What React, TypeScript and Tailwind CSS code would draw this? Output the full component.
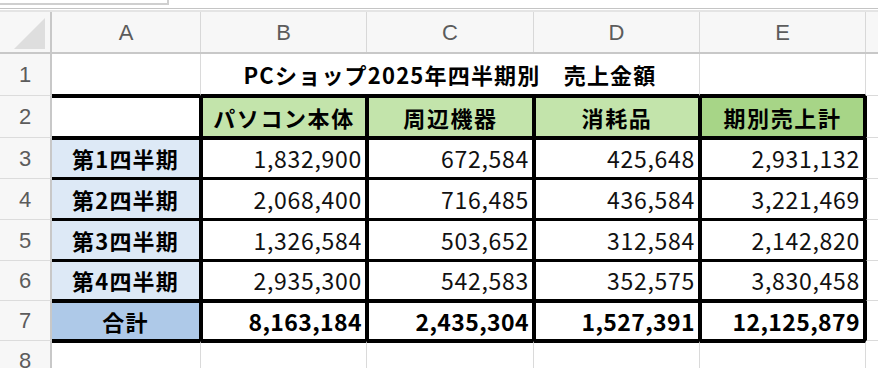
import React from "react";

const CJK = "font-['Noto_Sans_CJK_JP',sans-serif]";
const HDR = "font-['Liberation_Sans',sans-serif] text-[22px] text-[#5c5c5c]";

const W = {
  A: "w-[149px]",
  B: "w-[166px]",
  C: "w-[167px]",
  D: "w-[166px]",
  E: "w-[166px]",
};

function RowHead({ n, h }: { n: string; h: string }) {
  return (
    <div
      className={`${h} w-[52px] shrink-0 bg-[#f7f7f7] border-r-2 border-r-[#c8c8c8] border-b border-b-[#dcdcdc] flex items-center justify-center ${HDR}`}
    >
      {n}
    </div>
  );
}

const dataRows = [
  ["第1四半期", "1,832,900", "672,584", "425,648", "2,931,132"],
  ["第2四半期", "2,068,400", "716,485", "436,584", "3,221,469"],
  ["第3四半期", "1,326,584", "503,652", "312,584", "2,142,820"],
  ["第4四半期", "2,935,300", "542,583", "352,575", "3,830,458"],
];
const total = ["合計", "8,163,184", "2,435,304", "1,527,391", "12,125,879"];

export default function App() {
  const grid = "border-[#dadada]";
  return (
    <div className={`w-[878px] h-[368px] overflow-hidden bg-white flex flex-col ${CJK}`}>
      {/* top strip */}
      <div className="h-[12px] shrink-0 flex flex-col">
        <div className="h-[5px] w-[169px] border-r-2 border-b-2 border-[#cfcfcf] bg-white" />
        <div className="h-[3px]" />
        <div className="h-[1px] bg-[#c4c4c4]" />
        <div className="h-[1px] bg-white" />
        <div className="h-[2px] bg-[#e4e4e4]" />
      </div>

      {/* column header */}
      <div className="h-[42px] shrink-0 flex bg-[#f7f7f7] border-b-2 border-b-[#c8c8c8]">
        <div className="w-[52px] shrink-0 border-r-2 border-r-[#c8c8c8] flex items-end justify-end pr-[4px] pb-[3px]">
          <svg width="32" height="31" viewBox="0 0 32 31">
            <polygon points="31,0 31,31 0,31" fill="#dedede" />
          </svg>
        </div>
        {(["A", "B", "C", "D", "E"] as const).map((c) => (
          <div
            key={c}
            className={`${W[c]} shrink-0 border-r border-r-[#d8d8d8] flex items-center justify-center ${HDR}`}
          >
            {c}
          </div>
        ))}
        <div className="flex-1" />
      </div>

      {/* row 1 */}
      <div className="h-[42px] shrink-0 flex">
        <RowHead n="1" h="h-[42px]" />
        <div className={`${W.A} shrink-0 border-r ${grid} border-b-2 border-b-black`} />
        <div
          className={`w-[499px] shrink-0 border-r ${grid} border-b-2 border-b-black flex items-center justify-center text-[22px] font-bold tracking-[1.2px] text-black`}
        >
          PCショップ2025年四半期別　売上金額
        </div>
        <div className={`${W.E} shrink-0 border-r ${grid} border-b-2 border-b-black`} />
        <div className={`flex-1 border-b ${grid}`} />
      </div>

      {/* row 2 */}
      <div className="h-[42px] shrink-0 flex">
        <RowHead n="2" h="h-[42px]" />
        <div className={`${W.A} shrink-0 border-t-2 border-b-2 border-r-2 border-black bg-white`} />
        {[
          ["B", "パソコン本体", "bg-[#c3e4ab]"],
          ["C", "周辺機器", "bg-[#c3e4ab]"],
          ["D", "消耗品", "bg-[#c3e4ab]"],
        ].map(([c, t, bg]) => (
          <div
            key={c}
            className={`${W[c as "B"]} shrink-0 border-t-2 border-b-2 border-l-2 border-r-2 border-black ${bg} flex items-center justify-center text-[22px] font-bold tracking-[1.6px] text-black`}
          >
            {t}
          </div>
        ))}
        <div
          className={`${W.E} shrink-0 border-t-2 border-b-2 border-l-2 border-r-[3px] border-black bg-[#a7d587] flex items-center justify-center text-[22px] font-bold tracking-[1.6px] text-black`}
        >
          期別売上計
        </div>
        <div className={`flex-1 border-b ${grid} border-l border-l-black`} />
      </div>

      {/* data rows */}
      {dataRows.map((r, i) => {
        const h = i < 3 ? "h-[41px]" : "h-[40px]";
        const top = i === 0 ? "border-t-2" : "border-t";
        return (
          <div key={i} className={`${h} shrink-0 flex`}>
            <RowHead n={String(i + 3)} h={h} />
            <div
              className={`${W.A} shrink-0 ${top} border-b-2 border-r-2 border-black bg-[#dde9f6] flex items-center justify-center text-[22px] font-bold tracking-[1.2px] text-black`}
            >
              {r[0]}
            </div>
            {(["B", "C", "D"] as const).map((c, j) => (
              <div
                key={c}
                className={`${W[c]} shrink-0 ${top} border-b-2 border-l-2 border-r-2 border-black flex items-center justify-end pr-[3px] text-[23px] tracking-[0.7px] text-[#111]`}
              >
                {r[j + 1]}
              </div>
            ))}
            <div
              className={`${W.E} shrink-0 ${top} border-b-2 border-l-2 border-r-[3px] border-black flex items-center justify-end pr-[3px] text-[23px] tracking-[0.7px] text-[#111]`}
            >
              {r[4]}
            </div>
            <div className={`flex-1 border-b ${grid} border-l border-l-black`} />
          </div>
        );
      })}

      {/* row 7 total */}
      <div className="h-[40px] shrink-0 flex">
        <RowHead n="7" h="h-[40px]" />
        <div
          className={`${W.A} shrink-0 border-t-2 border-b-2 border-r-2 border-black bg-[#aec9e8] flex items-center justify-center text-[22px] font-bold tracking-[1.2px] text-black`}
        >
          {total[0]}
        </div>
        {(["B", "C", "D"] as const).map((c, j) => (
          <div
            key={c}
            className={`${W[c]} shrink-0 border-t-2 border-b-2 border-l-2 border-r-2 border-black flex items-center justify-end pr-[3px] text-[23px] font-bold tracking-[0.4px] text-black`}
          >
            {total[j + 1]}
          </div>
        ))}
        <div
          className={`${W.E} shrink-0 border-t-2 border-b-2 border-l-2 border-r-[3px] border-black flex items-center justify-end pr-[3px] text-[23px] font-bold tracking-[0.4px] text-black`}
        >
          {total[4]}
        </div>
        <div className={`flex-1 border-b ${grid} border-l border-l-black`} />
      </div>

      {/* row 8 */}
      <div className="h-[40px] shrink-0 flex">
        <RowHead n="8" h="h-[40px]" />
        {(["A", "B", "C", "D", "E"] as const).map((c) => (
          <div key={c} className={`${W[c]} shrink-0 border-t-2 border-t-black border-r ${grid}`} />
        ))}
        <div className="flex-1" />
      </div>
    </div>
  );
}
